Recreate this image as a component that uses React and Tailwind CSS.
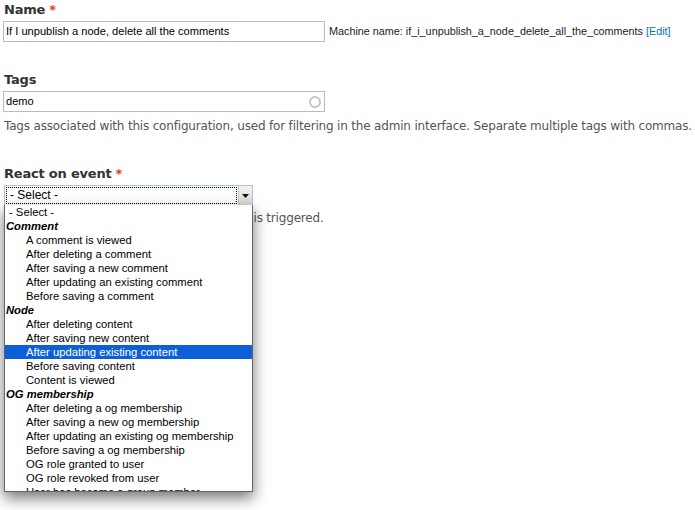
import React from 'react'

const events = [
  { t: '- Select -', kind: 'first' },
  { t: 'Comment', kind: 'group' },
  { t: 'A comment is viewed' },
  { t: 'After deleting a comment' },
  { t: 'After saving a new comment' },
  { t: 'After updating an existing comment' },
  { t: 'Before saving a comment' },
  { t: 'Node', kind: 'group' },
  { t: 'After deleting content' },
  { t: 'After saving new content' },
  { t: 'After updating existing content', active: true },
  { t: 'Before saving content' },
  { t: 'Content is viewed' },
  { t: 'OG membership', kind: 'group' },
  { t: 'After deleting a og membership' },
  { t: 'After saving a new og membership' },
  { t: 'After updating an existing og membership' },
  { t: 'Before saving a og membership' },
  { t: 'OG role granted to user' },
  { t: 'OG role revoked from user' },
  { t: 'User has become a group member' },
]

function Label({ children, req }) {
  return (
    <div className="h-4 text-[13px] leading-4 font-bold text-[#333] font-['DejaVu_Sans',sans-serif] tracking-[-0.2px]">
      {children}
      {req && <span className="text-[#e32] ml-1">*</span>}
    </div>
  )
}

function Option({ item }) {
  if (item.kind === 'group') {
    return <div className="h-[14px] leading-[14px] pl-[1px] font-bold italic text-black">{item.t}</div>
  }
  if (item.kind === 'first') {
    return <div className="h-[14px] leading-[14px] pl-[4px] text-black">{item.t}</div>
  }
  return (
    <div className={`h-[14px] leading-[14px] pl-[21px] ${item.active ? 'bg-[#0c5fd8] text-white' : 'text-black'}`}>
      {item.t}
    </div>
  )
}

export default function App() {
  return (
    <div className="relative w-[695px] h-[510px] bg-white overflow-hidden font-['Liberation_Sans',Arial,sans-serif]">
      <div className="pt-[2px] pl-[4px]">
        <Label req>Name</Label>
        <div className="flex items-center mt-[3px] -ml-[1px]">
          <div className="w-[322px] h-[21px] border border-[#bbb] bg-white text-[11.1px] leading-[19px] pl-[2px] text-black">
            If I unpublish a node, delete all the comments
          </div>
          <div className="ml-[4px] text-[10.8px] text-[#222]">
            Machine name: if_i_unpublish_a_node_delete_all_the_comments{' '}
            <span className="text-[#0074bd]">[Edit]</span>
          </div>
        </div>

        <div className="mt-[30px]">
          <Label>Tags</Label>
        </div>
        <div className="mt-[3px] -ml-[1px] w-[322px] h-[21px] border border-[#bbb] bg-white flex items-center justify-between pl-[2px] pr-[3px]">
          <span className="text-[11.1px] text-black">demo</span>
          <span className="w-[12px] h-[12px] rounded-full border-2 border-[#c4c4c4]" />
        </div>
        <div className="mt-[6px] text-[12px] leading-4 text-[#555] font-['DejaVu_Sans',sans-serif] tracking-[-0.18px] whitespace-nowrap">
          Tags associated with this configuration, used for filtering in the admin interface. Separate multiple tags with commas.
        </div>

        <div className="mt-[32px]">
          <Label req>React on event</Label>
        </div>
        <div className="relative mt-[3px] w-[249px] h-[21px] border border-[#a9c4e6] bg-white flex items-stretch">
          <div className="flex-1 m-[1px] border border-dotted border-black text-[12px] leading-[15px] pl-[3px] text-black">
            - Select -
          </div>
          <div className="w-[14px] bg-gradient-to-b from-[#f4f4f4] to-[#d8d8d8] border-l border-[#c8c8c8] flex items-center justify-center">
            <svg width="7" height="4" viewBox="0 0 7 4"><path d="M0 0h7L3.5 4z" fill="#111" /></svg>
          </div>
        </div>
        <div className="mt-[4px] text-[12px] leading-4 text-[#555] font-['DejaVu_Sans',sans-serif] tracking-[-0.18px] whitespace-nowrap">
          <span className="tracking-[-0.42px]">Whenever the event occurs, rule evaluation </span>is triggered.
        </div>
      </div>

      <div className="absolute left-[4px] top-[205px] w-[249px] h-[287px] bg-white border border-[#666] border-t-0 shadow-[0_6px_14px_rgba(0,0,0,0.55)] overflow-hidden text-[11.25px]">
        {events.map((e, i) => (
          <Option key={i} item={e} />
        ))}
      </div>
    </div>
  )
}
